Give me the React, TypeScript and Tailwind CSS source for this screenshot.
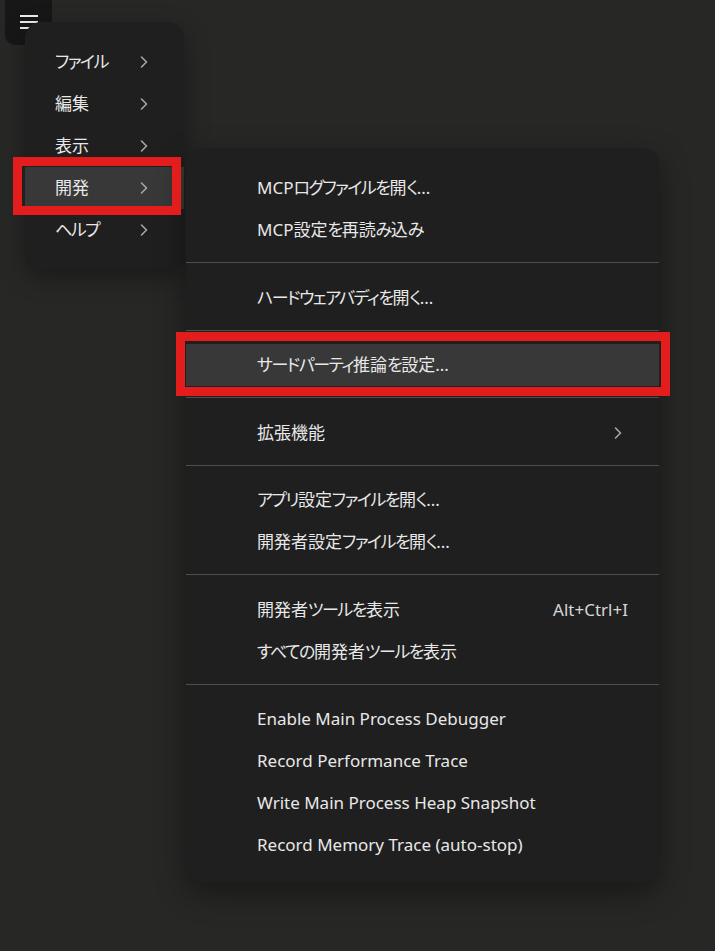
import { ChevronRight } from "lucide-react";

type Item =
  | { kind: "item"; label: string; shortcut?: string; submenu?: boolean; active?: boolean }
  | { kind: "sep" };

const mainItems = [
  { label: "ファイル" },
  { label: "編集" },
  { label: "表示" },
  { label: "開発", active: true },
  { label: "ヘルプ" },
];

const devItems: Item[] = [
  { kind: "item", label: "MCPログファイルを開く..." },
  { kind: "item", label: "MCP設定を再読み込み" },
  { kind: "sep" },
  { kind: "item", label: "ハードウェアバディを開く..." },
  { kind: "sep" },
  { kind: "item", label: "サードパーティ推論を設定...", active: true },
  { kind: "sep" },
  { kind: "item", label: "拡張機能", submenu: true },
  { kind: "sep" },
  { kind: "item", label: "アプリ設定ファイルを開く..." },
  { kind: "item", label: "開発者設定ファイルを開く..." },
  { kind: "sep" },
  { kind: "item", label: "開発者ツールを表示", shortcut: "Alt+Ctrl+I" },
  { kind: "item", label: "すべての開発者ツールを表示" },
  { kind: "sep" },
  { kind: "item", label: "Enable Main Process Debugger" },
  { kind: "item", label: "Record Performance Trace" },
  { kind: "item", label: "Write Main Process Heap Snapshot" },
  { kind: "item", label: "Record Memory Trace (auto-stop)" },
];

// kana in the UI font is narrower than Noto's, tighten it a bit
function Label({ text }: { text: string }) {
  const parts = text.split(/([\u3040-\u30ff]+)/);
  return (
    <span>
      {parts.map((p, i) =>
        /[\u3040-\u30ff]/.test(p) ? (
          <span key={i} className="tracking-[-1.5px]">
            {p}
          </span>
        ) : (
          p
        )
      )}
    </span>
  );
}

function Chevron() {
  return <ChevronRight size={20} strokeWidth={1.9} className="text-[#a8a8a8] shrink-0" />;
}

export default function App() {
  return (
    <div
      className="relative h-[951px] w-full overflow-hidden bg-[#272726] text-[17px] text-[#e8e8e8] [font-feature-settings:'palt']"
      style={{ fontFamily: '"Segoe UI", "Noto Sans", "Noto Sans CJK JP", sans-serif' }}
    >
      {/* menu button */}
      <button className="absolute left-[5px] top-[-12px] flex h-[57px] w-[47px] flex-col items-center justify-end gap-[4px] rounded-[10px] bg-[#171717] pb-[16px]">
        <span className="block h-[2px] w-[18px] bg-[#ececec]" />
        <span className="block h-[2px] w-[18px] bg-[#ececec]" />
        <span className="block h-[2px] w-[18px] bg-[#ececec]" />
      </button>

      {/* top-level menu */}
      <div className="absolute left-[25px] top-[22px] w-[159px] rounded-[16px] bg-[#1f1f1f] pb-[18px] pt-[19px] shadow-[0_8px_24px_rgba(0,0,0,0.35)]">
        {mainItems.map((it) => (
          <div
            key={it.label}
            className={`flex h-[42px] items-center justify-between pl-[30px] pr-[30px] ${it.active ? "bg-[#383838]" : ""}`}
          >
            <Label text={it.label} />
            <Chevron />
          </div>
        ))}
      </div>

      {/* developer submenu */}
      <div className="absolute left-[186px] top-[148px] w-[473px] rounded-[16px] bg-[#1f1f1f] pb-[17px] pt-[19px] shadow-[0_10px_30px_rgba(0,0,0,0.4)]">
        {devItems.map((it, i) =>
          it.kind === "sep" ? (
            <div key={i} className="mb-[13.5px] mt-[11px] h-px bg-[#4e4e4e]" />
          ) : (
            <div
              key={i}
              className={`flex h-[42px] items-center justify-between pl-[71px] pr-[31px] ${it.active ? "bg-[#383838]" : ""}`}
            >
              <Label text={it.label} />
              {it.shortcut && <span className="text-[#d6d6d6]">{it.shortcut}</span>}
              {it.submenu && <Chevron />}
            </div>
          )
        )}
      </div>

      {/* annotation boxes */}
      <div className="pointer-events-none absolute left-[13px] top-[157px] h-[58px] w-[168px] border-[9px] border-[#e31c1c]" />
      <div className="pointer-events-none absolute left-[176px] top-[332px] h-[64px] w-[494px] border-[9px] border-[#e31c1c]" />
    </div>
  );
}
